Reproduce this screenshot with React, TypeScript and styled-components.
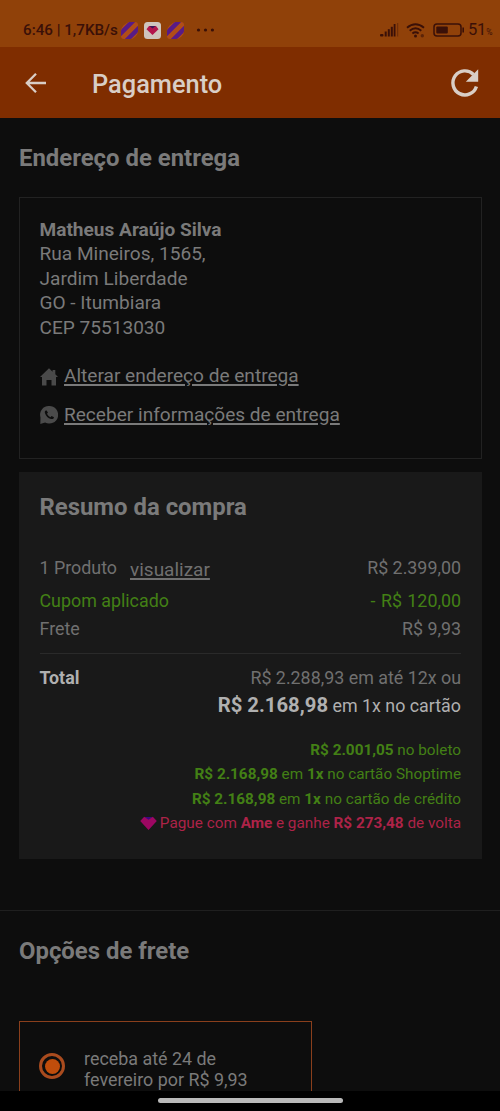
import React from "react";
import styled, { createGlobalStyle } from "styled-components";

const GlobalStyle = createGlobalStyle`
  * { box-sizing: border-box; }
  body { margin: 0; background: #0d0d0d; font-family: Roboto, "Liberation Sans", sans-serif; color: #7a7a7a; }
  a { color: inherit; }
  svg { display: block; flex: none; }
`;

const Screen = styled.div`
  width: 500px;
  height: 1111px;
  display: flex;
  flex-direction: column;
  overflow: hidden;
  background: #0d0d0d;
`;

const StatusBar = styled.div`
  height: 47px;
  flex: none;
  display: flex;
  justify-content: space-between;
  padding: 12px 8px 0 23px;
  background: #904109;
  color: #3a1008;
`;

const StatusGroup = styled.div<{ $gap?: number }>`
  display: flex;
  align-items: center;
  height: 36px;
  gap: ${(p) => p.$gap ?? 0}px;
`;

const Clock = styled.span`
  width: 98px;
  margin-right: -6px;
  font-size: 15.2px;
  font-weight: 500;
  white-space: nowrap;
`;

const Battery = styled.span`
  width: 24px;
  margin: 1px 0 0 -4px;
  font-size: 16.5px;
  line-height: 18px;
  letter-spacing: -0.2px;
  white-space: nowrap;
  small { font-size: 8.5px; }
`;

const AppBar = styled.header`
  height: 71px;
  flex: none;
  display: flex;
  align-items: center;
  padding: 0 18px 0 23px;
  background: #7f2d00;
  color: #d9cec6;
`;

const AppTitle = styled.h1`
  flex: 1;
  margin: 3px 0 0 43px;
  font-size: 25.4px;
  line-height: 32px;
  font-weight: 500;
`;

const Content = styled.main`
  flex: 1;
  min-height: 0;
  overflow: hidden;
`;

const SectionTitle = styled.h2`
  margin: 0;
  font-size: 23.9px;
  line-height: 32px;
  font-weight: 700;
`;

const Section = styled.section<{ $top: number }>`
  padding: ${(p) => p.$top}px 18.5px 0 19px;
`;

const AddressCard = styled.div`
  margin-top: 23px;
  height: 262px;
  padding: 19.6px 20px 0 19.5px;
  border: 1px solid #222;
  font-size: 19.08px;
  line-height: 24.5px;
`;

const Address = styled.address`
  font-style: normal;
  margin-bottom: 24.2px;
`;

const IconLink = styled.a`
  display: flex;
  align-items: center;
  gap: 6.5px;
  height: 24px;
  margin-bottom: 14.5px;
  svg { color: #4a4a4a; margin-top: 1px; }
  span { text-decoration: underline; text-decoration-thickness: 1.5px; text-underline-offset: 2px; }
`;

const SummaryCard = styled.div`
  margin-top: 13px;
  height: 387px;
  padding: 18.5px 20.5px 0;
  background: #191919;
`;

const SummaryRow = styled.div<{ $top?: number; $green?: boolean }>`
  display: flex;
  justify-content: space-between;
  margin-top: ${(p) => p.$top ?? 0}px;
  font-size: 17.85px;
  line-height: 24px;
  color: ${(p) => (p.$green ? "#438015" : "#707070")};
`;

const Discount = styled.span`
  word-spacing: 1px;
`;

const ViewLink = styled.a`
  position: relative;
  top: 2.5px;
  margin-left: 13px;
  font-size: 19px;
  text-decoration: underline;
  text-decoration-thickness: 1.5px;
  text-underline-offset: 2px;
`;

const Divider = styled.hr<{ $top: number }>`
  height: 1px;
  margin: ${(p) => p.$top}px 0 0;
  border: 0;
  background: #2a2a2a;
`;

const PageDivider = styled(Divider)`
  background: #1f1f1f;
`;

const TotalLabel = styled.strong`
  color: #b0b0b0;
`;

const CashTotal = styled.div`
  margin-top: 1px;
  font-size: 17.85px;
  line-height: 28px;
  text-align: right;
  color: #b0b0b0;
  b { font-size: 20.3px; }
`;

const Offers = styled.div`
  margin-top: 18.5px;
`;

const Offer = styled.div<{ $pink?: boolean }>`
  display: flex;
  justify-content: flex-end;
  align-items: center;
  gap: 3px;
  font-size: 15.3px;
  line-height: 24.35px;
  color: ${(p) => (p.$pink ? "#ad2348" : "#438015")};
`;

const ShippingCard = styled.div`
  display: flex;
  width: 293px;
  height: 100px;
  margin-top: 54px;
  padding: 25.5px 20px;
  border: 1px solid #8a3f1c;
  font-size: 17.9px;
  line-height: 21px;
`;

const ShippingText = styled.div`
  margin-left: 19px;
`;

const Radio = styled.span`
  width: 26px;
  height: 26px;
  margin: 5.5px 0 0 -1px;
  flex: none;
  border: 3px solid #a94b1e;
  border-radius: 50%;
  padding: 2.5px;
  &::before {
    content: "";
    display: block;
    width: 15px;
    height: 15px;
    border-radius: 50%;
    background: #c04d0b;
  }
`;

const NavBar = styled.div`
  height: 20px;
  flex: none;
  background: #000;
  padding-top: 7px;
`;

const NavPill = styled.div`
  width: 185px;
  height: 5px;
  margin: 0 auto;
  border-radius: 3px;
  background: #b9b9b9;
`;

const StripeIcon = ({ id }: { id: string }) => (
  <svg width="17" height="17" viewBox="0 0 17 17">
    <clipPath id={id}><path d="M8 0h6q3 0 3 3v6q0 3-2.500 5.500T9 17H3q-3 0-3-3V9q0-3 2.500-5.500T8 0z" /></clipPath>
    <g clipPath={`url(#${id})`}>
      <rect width="17" height="17" fill="#b04d18" />
      <path d="M-2 13L13-2M3 21L21 3" stroke="#581b86" strokeWidth="4.500" />
    </g>
  </svg>
);

const AmeIcon = () => (
  <svg width="17" height="17" viewBox="0 0 17 17">
    <rect width="17" height="17" rx="3.5" fill="#cfc5bd" />
    <path d="M5 4h7l2.500 3.300L8.500 13 2.500 7.300z" fill="#b3164c" />
    <path d="M5.500 4h6L8.500 6.500z" fill="#3b1557" />
  </svg>
);

const Dots = () => (
  <svg width="18" height="5" viewBox="0 0 18 5" fill="#3a1008">
    <circle cx="2.500" cy="2" r="1.600" /><circle cx="9.500" cy="2" r="1.600" /><circle cx="16.400" cy="2" r="1.600" />
  </svg>
);

const SignalIcon = () => (
  <svg width="19" height="14" viewBox="0 0 19 14" fill="#3a1008">
    <rect x="0" y="11" width="3.500" height="2.500" rx="1" /><rect x="4.700" y="8.500" width="2" height="5" />
    <rect x="7.800" y="6.200" width="2" height="7.300" /><rect x="10.800" y="3.800" width="2" height="9.700" />
    <rect x="13.700" y="1" width="1.800" height="12.500" /><rect x="17.200" y="0" width="1" height="13.500" opacity=".45" />
  </svg>
);

const WifiIcon = () => (
  <svg width="20" height="15" viewBox="0 0 20 15" fill="none" stroke="#3a1008" strokeWidth="1.9">
    <path d="M1 4.700q8.500-7 17 0M3.700 7.700q5.800-4.800 11.600 0M6.400 10.600q3.100-2.500 6.200 0" />
    <circle cx="9.500" cy="13" r="1.500" fill="#3a1008" stroke="none" />
    <circle cx="16.300" cy="12.700" r="1.700" fill="#3a1008" stroke="none" opacity=".6" />
  </svg>
);

const BatteryIcon = () => (
  <svg width="32" height="14" viewBox="0 0 32 14">
    <rect x="1" y="1" width="27" height="12" rx="3" fill="none" stroke="#3a1008" strokeWidth="1.5" />
    <rect x="3.300" y="3.500" width="11.500" height="7" rx="1" fill="#3a1008" />
    <path d="M30.200 4.500v5" stroke="#3a1008" strokeWidth="1.6" />
  </svg>
);

const BackIcon = () => (
  <svg width="26" height="24" viewBox="0 0 26 24" fill="none" stroke="currentColor" strokeWidth="2.3">
    <path d="M23 12H4M13 2.700L3.800 12 13 21.300" />
  </svg>
);

const ReloadIcon = () => (
  <svg width="34" height="34" viewBox="0 0 34 34">
    <path d="M28.400 20.400A12 12 0 1 1 25.500 8.500" fill="none" stroke="currentColor" strokeWidth="3.4" />
    <path d="M30.200 3.300v12.500H17.800z" fill="currentColor" />
  </svg>
);

const HomeIcon = () => (
  <svg width="18" height="18" viewBox="0 0 18 18" fill="currentColor">
    <path d="M9 .3l3.600 3.400V2h2.700v4.200L18 9.100h-2v8.400h-4.500V12h-5v5.500H2V9.100H0z" />
  </svg>
);

const WhatsAppIcon = () => (
  <svg width="18" height="18" viewBox="0 0 18 18">
    <path d="M9.200 0a8.800 8.800 0 1 1-4.100 16.500L.3 18l.2-6.500A8.800 8.800 0 0 1 9.200 0z" fill="currentColor" />
    <path d="M6.300 4.200C5 4.600 4.500 5.800 5 7.200c1 3 3 4.900 6 5.800 1.500.4 2.800-.3 3-1.800l-2.400-1.300-1.200 1.300C8.800 10.500 7.700 9.300 7 7.800l1-1.200z" fill="#0d0d0d" />
  </svg>
);

const HeartIcon = () => (
  <svg width="17" height="15" viewBox="0 0 17 15">
    <path d="M4.500 1h8L8.500 5z" fill="#3a0880" />
    <path d="M4.200.8L8.500 3.800 12.800.8 16.800 5 8.500 14 .2 5z" fill="#9d0762" />
  </svg>
);

export default function App() {
  return (
    <Screen>
      <GlobalStyle />
      <StatusBar>
        <StatusGroup $gap={6}>
          <Clock>6:46 | 1,7KB/s</Clock>
          <StripeIcon id="stripe-a" />
          <AmeIcon />
          <StripeIcon id="stripe-b" />
          <span />
          <Dots />
        </StatusGroup>
        <StatusGroup $gap={7}>
          <SignalIcon />
          <WifiIcon />
          <BatteryIcon />
          <Battery>51<small>%</small></Battery>
        </StatusGroup>
      </StatusBar>
      <AppBar>
        <BackIcon />
        <AppTitle>Pagamento</AppTitle>
        <ReloadIcon />
      </AppBar>
      <Content>
        <Section $top={24}>
          <SectionTitle>Endereço de entrega</SectionTitle>
          <AddressCard>
            <Address>
              <b>Matheus Araújo Silva</b><br />
              Rua Mineiros, 1565,<br />
              Jardim Liberdade<br />
              GO - Itumbiara<br />
              CEP 75513030
            </Address>
            <IconLink><HomeIcon /><span>Alterar endereço de entrega</span></IconLink>
            <IconLink><WhatsAppIcon /><span>Receber informações de entrega</span></IconLink>
          </AddressCard>
          <SummaryCard>
            <SectionTitle>Resumo da compra</SectionTitle>
            <SummaryRow $top={33}>
              <span>1 Produto<ViewLink>visualizar</ViewLink></span>
              <span>R$ 2.399,00</span>
            </SummaryRow>
            <SummaryRow $top={9} $green><span>Cupom aplicado</span><Discount>- R$ 120,00</Discount></SummaryRow>
            <SummaryRow $top={4}><span>Frete</span><span>R$ 9,93</span></SummaryRow>
            <Divider $top={12.5} />
            <SummaryRow $top={11.5}>
              <TotalLabel>Total</TotalLabel>
              <span>R$ 2.288,93 em até 12x ou</span>
            </SummaryRow>
            <CashTotal><b>R$ 2.168,98</b> em 1x no cartão</CashTotal>
            <Offers>
              <Offer><span><b>R$ 2.001,05</b> no boleto</span></Offer>
              <Offer><span><b>R$ 2.168,98</b> em <b>1x</b> no cartão Shoptime</span></Offer>
              <Offer><span><b>R$ 2.168,98</b> em <b>1x</b> no cartão de crédito</span></Offer>
              <Offer $pink><HeartIcon /><span>Pague com <b>Ame</b> e ganhe <b>R$ 273,48</b> de volta</span></Offer>
            </Offers>
          </SummaryCard>
        </Section>
        <PageDivider $top={51} />
        <Section $top={24}>
          <SectionTitle>Opções de frete</SectionTitle>
          <ShippingCard>
            <Radio />
            <ShippingText>receba até 24 de<br />fevereiro por R$ 9,93</ShippingText>
          </ShippingCard>
        </Section>
      </Content>
      <NavBar><NavPill /></NavBar>
    </Screen>
  );
}
